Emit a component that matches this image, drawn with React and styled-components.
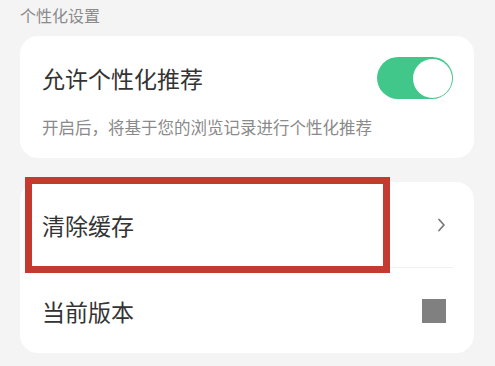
import React from "react";
import styled, { createGlobalStyle } from "styled-components";

const GlobalStyle = createGlobalStyle`
  html, body {
    margin: 0;
    padding: 0;
    background: #f4f4f4;
    font-family: "Noto Sans CJK SC", "Noto Sans", sans-serif;
  }
`;

const Page = styled.div`
  padding: 0 21px 0 20px;
  display: flex;
  flex-direction: column;
`;

const SectionLabel = styled.div`
  font-size: 16px;
  line-height: 30px;
  height: 36px;
  color: #8a8a8a;
  margin-top: 0;
`;

const Card = styled.div`
  background: #ffffff;
  border-radius: 18px;
  margin-bottom: ${(p) => p.$gap || 0}px;
`;

const SwitchBlock = styled.div`
  padding: 21px 21px 0 22px;
  height: 122px;
  box-sizing: border-box;
`;

const SwitchHead = styled.div`
  display: flex;
  align-items: center;
  justify-content: space-between;
`;

const Title = styled.div`
  font-size: 23px;
  color: #333333;
  line-height: 42px;
`;

const Hint = styled.div`
  font-size: 16.5px;
  color: #8a8a8a;
  margin-top: 17px;
  line-height: 22px;
`;

const Toggle = styled.div`
  width: 76px;
  height: 42px;
  border-radius: 21px;
  background: ${(p) => (p.$on ? "#42c78b" : "#dcdcdc")};
  display: flex;
  align-items: center;
  justify-content: ${(p) => (p.$on ? "flex-end" : "flex-start")};
  padding: 0 1.5px;
  box-sizing: border-box;
`;

const Knob = styled.div`
  width: 39px;
  height: 39px;
  border-radius: 50%;
  background: #ffffff;
`;

const Row = styled.div`
  position: relative;
  height: ${(p) => p.$h}px;
  display: flex;
  align-items: center;
  justify-content: space-between;
  padding: 0 26px 0 22px;
  margin-top: ${(p) => p.$mt || 0}px;
`;

const Divider = styled.div`
  height: 1px;
  background: #f1f1f1;
  margin: 0 21px 0 22px;
`;

const RowText = styled.div`
  font-size: 23px;
  color: #333333;
`;

const Square = styled.div`
  width: 24px;
  height: 24px;
  background: #808080;
  margin-right: 2px;
`;

const Highlight = styled.div`
  position: absolute;
  left: 5px;
  top: -5px;
  width: 365px;
  height: 96px;
  border: 7px solid #c53a2f;
  box-sizing: border-box;
  pointer-events: none;
`;

const Chevron = () => (
  <svg width="10" height="16" viewBox="0 0 10 16" style={{ marginRight: 2 }}>
    <path d="M3 2.5 L8 8 L3 13.5" fill="none" stroke="#7a7a7a" strokeWidth="1.8" strokeLinecap="round" strokeLinejoin="round" />
  </svg>
);

export default function App() {
  return (
    <>
      <GlobalStyle />
      <Page>
        <SectionLabel>个性化设置</SectionLabel>
        <Card $gap={24}>
          <SwitchBlock>
            <SwitchHead>
              <Title>允许个性化推荐</Title>
              <Toggle $on>
                <Knob />
              </Toggle>
            </SwitchHead>
            <Hint>开启后，将基于您的浏览记录进行个性化推荐</Hint>
          </SwitchBlock>
        </Card>
        <Card>
          <Row $h={85}>
            <RowText>清除缓存</RowText>
            <Chevron />
            <Highlight />
          </Row>
          <Divider />
          <Row $h={85}>
            <RowText>当前版本</RowText>
            <Square />
          </Row>
        </Card>
      </Page>
    </>
  );
}
